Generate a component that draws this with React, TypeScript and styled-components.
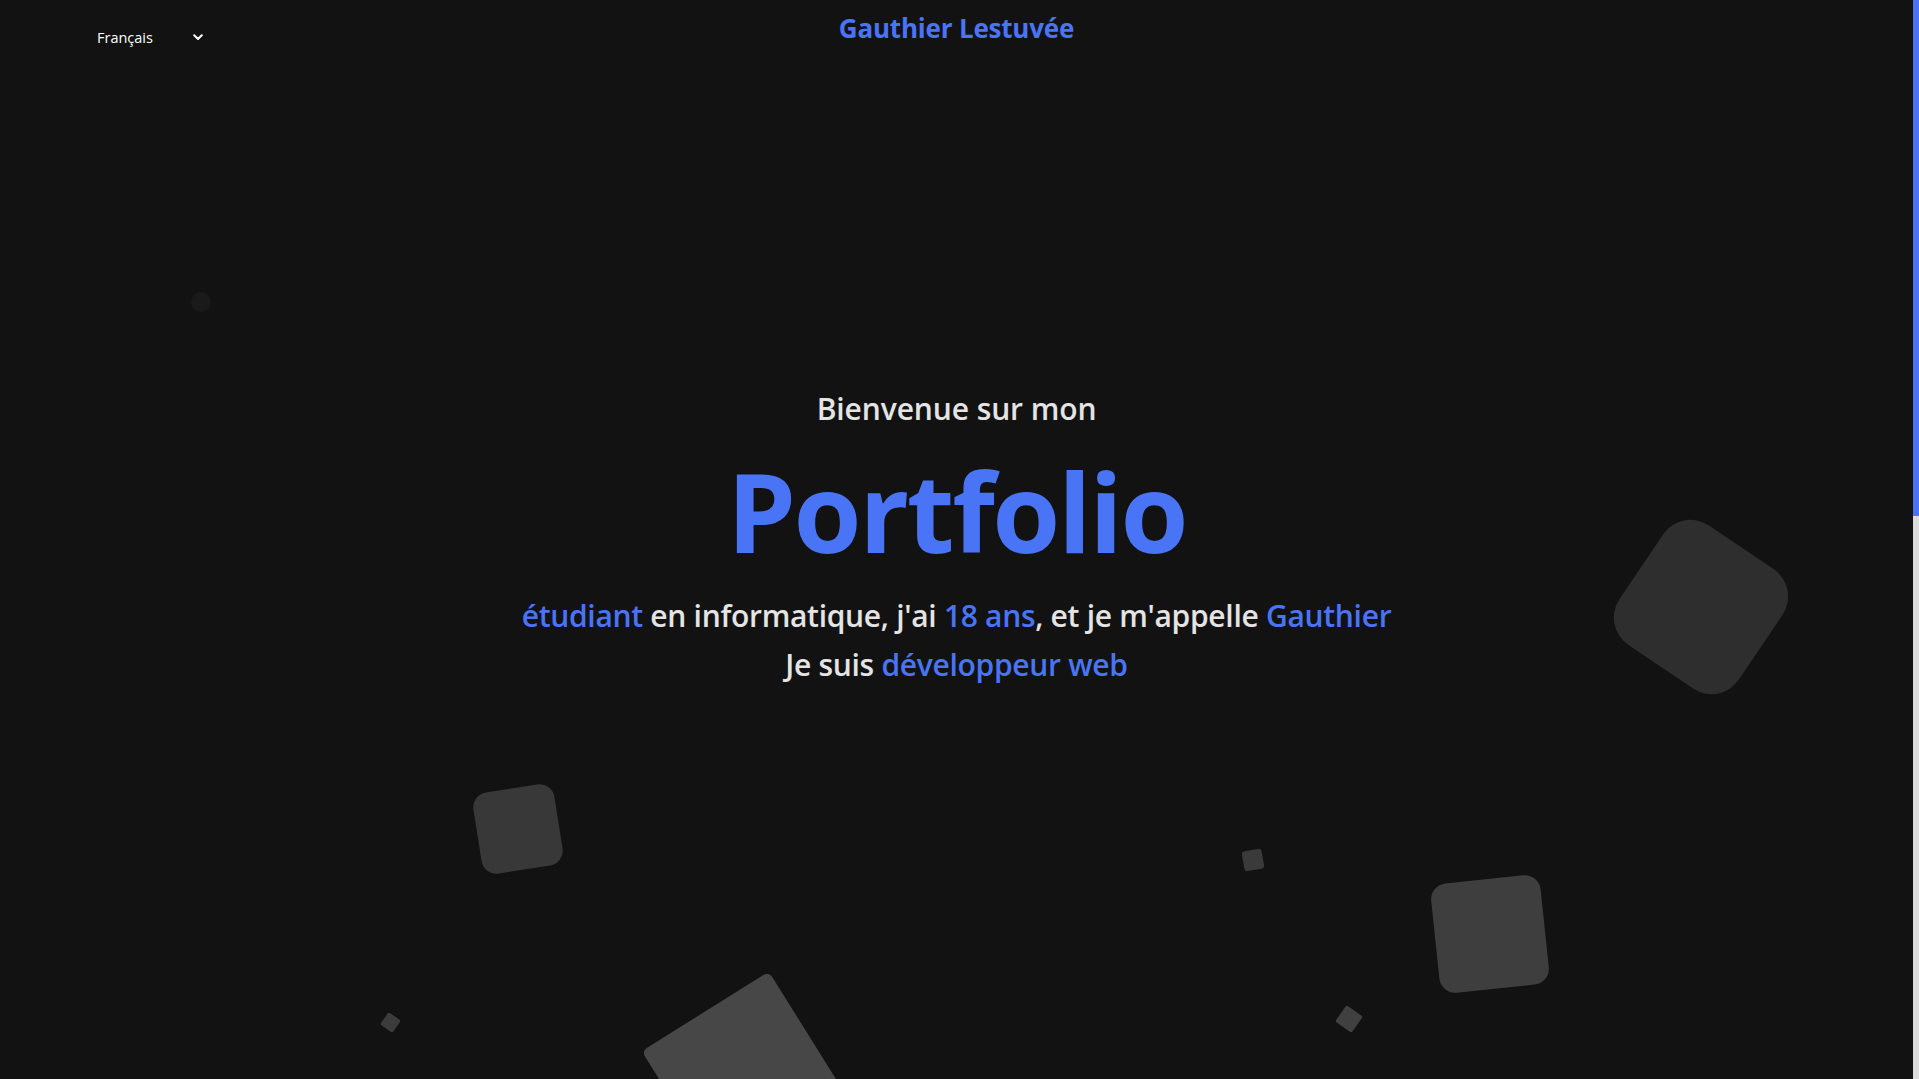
import React from "react";
import styled, { createGlobalStyle } from "styled-components";

const GlobalStyle = createGlobalStyle`
  html, body {
    margin: 0;
    padding: 0;
    background: #121212;
    overflow: hidden;
  }
  body {
    font-family: "Open Sans", "Noto Sans", "Liberation Sans", sans-serif;
    color: #e4e4e4;
  }
  *, *::before, *::after { box-sizing: border-box; }
`;

const BLUE = "#4a74f6";

const Page = styled.div`
  display: grid;
  grid-template-columns: 1fr 6px;
  height: 100vh;
`;

const ScrollRail = styled.aside`
  background: #dcdcdc;
  display: flex;
  flex-direction: column;
`;

const ScrollThumb = styled.div`
  height: 516px;
  background: ${BLUE};
`;

const Hero = styled.section`
  position: relative;
  height: 100vh;
  overflow: hidden;
  display: grid;
  grid-template-rows: 56px 1fr 56px;
`;

const Header = styled.header`
  position: relative;
  z-index: 2;
  display: grid;
  grid-template-columns: 1fr auto 1fr;
  align-items: start;
`;

const LangWrap = styled.div`
  position: relative;
  justify-self: start;
  margin: 26px 0 0 93px;
  width: 118px;
`;

const LangSelect = styled.select`
  appearance: none;
  -webkit-appearance: none;
  width: 100%;
  background: transparent;
  border: none;
  outline: none;
  color: #ffffff;
  font-family: "Open Sans", "Noto Sans", sans-serif;
  font-size: 14.5px;
  line-height: 20px;
  padding: 2px 20px 2px 4px;
  cursor: pointer;
  option { color: #000; }
`;

const Chevron = styled.svg`
  position: absolute;
  right: 8px;
  top: 8px;
  pointer-events: none;
`;

const Title = styled.h1`
  margin: 12px 0 0;
  font-size: 26px;
  font-weight: 700;
  line-height: 32px;
  color: ${BLUE};
  letter-spacing: -0.2px;
`;

const Content = styled.div`
  position: relative;
  z-index: 2;
  display: flex;
  flex-direction: column;
  align-items: center;
  justify-content: center;
  text-align: center;
`;

const Welcome = styled.h2`
  margin: 0;
  font-size: 30px;
  line-height: 37px;
  font-weight: 600;
  color: #e4e4e4;
  letter-spacing: -0.1px;
`;

const Big = styled.h3`
  margin: 22px 0 0;
  font-size: 110px;
  line-height: 123px;
  font-weight: 700;
  color: ${BLUE};
  letter-spacing: -2.4px;
`;

const Desc = styled.p`
  margin: 19px 0 0;
  font-size: 30px;
  line-height: 49px;
  font-weight: 600;
  color: #e4e4e4;
  letter-spacing: -0.3px;
`;

const Hi = styled.span`
  color: ${BLUE};
`;

const Shape = styled.span<{
  $x: number;
  $y: number;
  $s: number;
  $r: number;
  $rot: number;
  $c: string;
}>`
  position: absolute;
  left: ${(p) => p.$x - p.$s / 2}px;
  top: ${(p) => p.$y - p.$s / 2}px;
  width: ${(p) => p.$s}px;
  height: ${(p) => p.$s}px;
  border-radius: ${(p) => p.$r}px;
  background: ${(p) => p.$c};
  transform: rotate(${(p) => p.$rot}deg);
  z-index: 1;
`;

const shapes = [
  { x: 1701, y: 607, s: 144, r: 33, rot: 34, c: "#2e2e2e" },
  { x: 517.5, y: 829, s: 82, r: 15, rot: -9, c: "#383838" },
  { x: 390, y: 1022, s: 15, r: 2, rot: 35, c: "#3c3c3c" },
  { x: 745, y: 1075, s: 150, r: 6, rot: -32, c: "#474747" },
  { x: 1253, y: 860, s: 20, r: 3, rot: -10, c: "#3a3a3a" },
  { x: 1349, y: 1019, s: 20, r: 2, rot: 35, c: "#404040" },
  { x: 1490, y: 934, s: 110, r: 16, rot: -6, c: "#3e3e3e" },
  { x: 201, y: 302, s: 20, r: 10, rot: 0, c: "#1a1a1a" },
];

export default function App() {
  return (
    <>
      <GlobalStyle />
      <Page>
        <Hero>
          {shapes.map((sh, i) => (
            <Shape key={i} $x={sh.x} $y={sh.y} $s={sh.s} $r={sh.r} $rot={sh.rot} $c={sh.c} />
          ))}
          <Header>
            <LangWrap>
              <LangSelect defaultValue="fr">
                <option value="fr">Français</option>
                <option value="en">English</option>
              </LangSelect>
              <Chevron width="10" height="7" viewBox="0 0 10 7">
                <path d="M1.2 1.3 L5 5 L8.8 1.3" fill="none" stroke="#ffffff" strokeWidth="2" strokeLinecap="round" strokeLinejoin="round" />
              </Chevron>
            </LangWrap>
            <Title>Gauthier Lestuvée</Title>
            <div />
          </Header>
          <Content>
            <Welcome>Bienvenue sur mon</Welcome>
            <Big>Portfolio</Big>
            <Desc>
              <Hi>étudiant</Hi> en informatique, j'ai <Hi>18 ans</Hi>, et je m'appelle <Hi>Gauthier</Hi>
              <br />
              Je suis <Hi>développeur web</Hi>
            </Desc>
          </Content>
          <div />
        </Hero>
        <ScrollRail aria-hidden="true">
          <ScrollThumb />
        </ScrollRail>
      </Page>
    </>
  );
}
